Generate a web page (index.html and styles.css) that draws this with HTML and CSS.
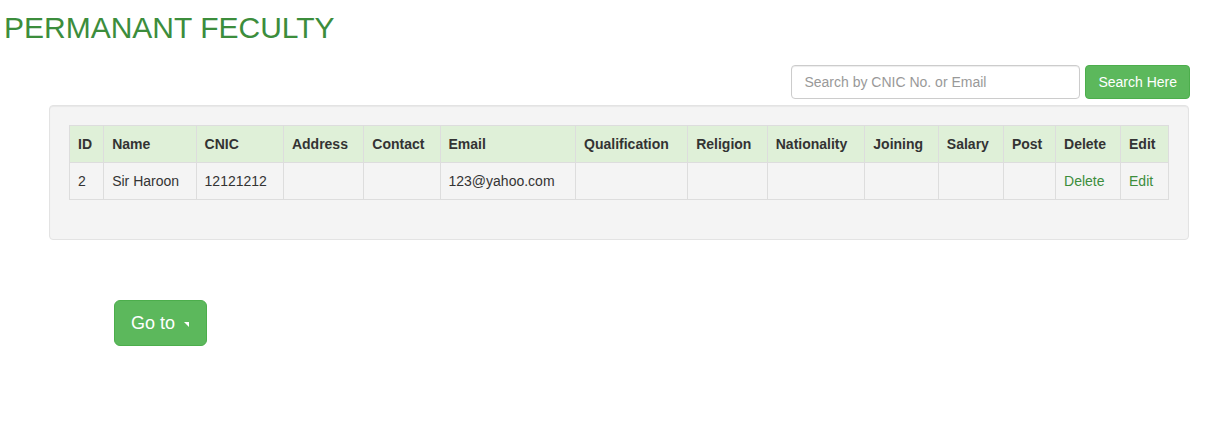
FILE: index.html
```html
<!DOCTYPE html>
<html>
<head>
<meta charset="utf-8">
<link rel="stylesheet" href="styles.css">
</head>
<body>
<h1 class="title">PERMANANT FECULTY</h1>
<form class="search-bar">
  <input class="search-input" type="text" placeholder="Search by CNIC No. or Email">
  <button class="btn btn-success" type="button">Search Here</button>
</form>
<div class="well">
  <table class="table">
    <thead>
      <tr>
        <th>ID</th><th>Name</th><th>CNIC</th><th>Address</th><th>Contact</th><th>Email</th><th>Qualification</th><th>Religion</th><th>Nationality</th><th>Joining</th><th>Salary</th><th>Post</th><th>Delete</th><th>Edit</th>
      </tr>
    </thead>
    <tbody>
      <tr>
        <td>2</td><td>Sir Haroon</td><td>12121212</td><td></td><td></td><td>123@yahoo.com</td><td></td><td></td><td></td><td></td><td></td><td></td><td><a href="#">Delete</a></td><td><a href="#">Edit</a></td>
      </tr>
    </tbody>
  </table>
</div>
<div class="goto-wrap">
  <button class="btn btn-success btn-lg" type="button">Go to <svg class="caret" width="5" height="5" viewBox="0 0 5 5"><polygon points="0,0 5,0 5,5" fill="#fff"/></svg></button>
</div>
</body>
</html>
```
FILE: styles.css
```css
* { box-sizing: border-box; }
body {
  margin: 0;
  font-family: "Liberation Sans", Arial, sans-serif;
  font-size: 14px;
  color: #333;
  background: #fff;
}
.title {
  margin: 0;
  padding: 10px 0 0 4px;
  font-size: 30px;
  font-weight: normal;
  color: #3c8d3c;
  line-height: 36px;
}
.search-bar {
  display: flex;
  justify-content: flex-end;
  gap: 5px;
  margin: 19px 27px 0 0;
}
.search-input {
  width: 289px;
  height: 34px;
  padding: 6px 12px;
  font-family: inherit;
  font-size: 14px;
  color: #555;
  border: 1px solid #ccc;
  border-radius: 4px;
  box-shadow: inset 0 1px 1px rgba(0,0,0,.075);
}
.search-input::placeholder { color: #999; }
.btn {
  font-family: inherit;
  font-size: 14px;
  line-height: 20px;
  padding: 6px 12px;
  border: 1px solid #4cae4c;
  border-radius: 4px;
  color: #fff;
  background: #5cb85c;
  cursor: pointer;
}
.well {
  margin: 6px 28px 0 49px;
  padding: 19px;
  min-height: 135px;
  background: #f4f4f4;
  border: 1px solid #e3e3e3;
  border-radius: 4px;
  box-shadow: inset 0 1px 1px rgba(0,0,0,.05);
}
.table {
  width: 100%;
  border-collapse: collapse;
  border: 1px solid #ddd;
}
.table th, .table td {
  border: 1px solid #ddd;
  padding: 8px;
  line-height: 20px;
  text-align: left;
  white-space: nowrap;
}
.table th {
  background: #dff0d8;
  font-weight: bold;
}
.table td a {
  color: #3c8d3c;
  text-decoration: none;
}
.goto-wrap {
  padding: 60px 0 0 114px;
}
.btn-lg {
  font-size: 18px;
  line-height: 24px;
  padding: 10px 16px;
  border-radius: 6px;
  height: 46px;
}
.caret {
  margin-left: 4px;
  margin-right: 1px;
  vertical-align: 2px;
}
```
